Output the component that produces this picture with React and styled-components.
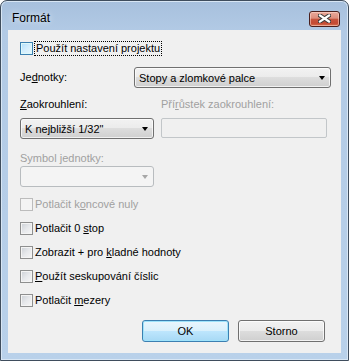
import React from 'react';
import styled, { createGlobalStyle, css } from 'styled-components';

const GlobalStyle = createGlobalStyle`
  html, body {
    margin: 0;
    padding: 0;
    background: #ffffff;
  }
  body {
    font-family: "Liberation Sans", Arial, sans-serif;
    font-size: 11px;
    color: #000;
  }
`;

const Window = styled.div`
  width: 349px;
  height: 361px;
  box-sizing: border-box;
  border: 1px solid #3f4d5d;
  border-radius: 7px 7px 0 0;
  background: linear-gradient(180deg, #a7c0dd 0px, #b2cae5 30px, #b9d1ea 100%);
  box-shadow: inset 0 0 0 1px #d8e6f4;
  display: flex;
  flex-direction: column;
  padding: 0 7px 7px 7px;
`;

const TitleBar = styled.div`
  height: 29px;
  display: flex;
  align-items: center;
  justify-content: space-between;
  padding: 0 1px 0 4px;
`;

const Title = styled.span`
  font-family: "Liberation Sans", Arial, sans-serif;
  font-size: 12px;
  color: #000;
  margin-top: 4px;
  text-shadow: 0 0 6px rgba(255, 255, 255, 0.9);
`;

const CloseButton = styled.div`
  width: 31px;
  height: 16px;
  box-sizing: border-box;
  margin-top: 6px;
  border: 1px solid #4a1f1d;
  border-radius: 3px;
  background: linear-gradient(180deg, #e9a99b 0%, #dd8d7c 45%, #c7553f 50%, #c44a33 80%, #d8704e 100%);
  box-shadow: inset 0 0 0 1px rgba(255, 220, 210, 0.55);
  display: flex;
  align-items: center;
  justify-content: center;
`;

const Client = styled.div`
  flex: 1;
  background: #f0f0f0;
  display: flex;
  flex-direction: column;
  padding: 10px 10px 0 12px;
`;

const Row = styled.div`
  display: flex;
  align-items: center;
  height: ${p => p.h || 21}px;
  margin-top: ${p => p.mt || 0}px;
`;

const Label = styled.span`
  color: ${p => (p.disabled ? '#a0a0a0' : '#000')};
  white-space: nowrap;
  line-height: 13px;
  ${p => p.focus && css`
    outline: 1px dotted #000;
    outline-offset: 0;
    padding: 0 1px;
  `}
`;

const Box = styled.span`
  width: 13px;
  height: 13px;
  box-sizing: border-box;
  flex: none;
  margin-right: 2px;
  border: 1px solid #8e8f8f;
  background: linear-gradient(135deg, #cbcfd5 0%, #e6e8eb 50%, #f7f7f7 100%);
  box-shadow: inset 0 0 0 1px #f4f4f4;
  ${p => p.hover && css`
    border-color: #3c7fb1;
    background: linear-gradient(135deg, #b1dffd 0%, #d4eefd 50%, #e9f7fe 100%);
    box-shadow: inset 0 0 0 1px #def9fa;
  `}
  ${p => p.disabled && css`
    border-color: #bcbcbc;
    background: #f4f4f4;
    box-shadow: none;
  `}
`;

const Combo = styled.div`
  width: ${p => p.w}px;
  height: 21px;
  box-sizing: border-box;
  margin-left: ${p => (p.right ? 'auto' : '0')};
  border: 1px solid ${p => (p.disabled ? '#b8bcbf' : '#707070')};
  border-radius: 3px;
  background: ${p => (p.disabled
    ? '#f4f4f4'
    : 'linear-gradient(180deg, #f2f2f2 0%, #ebebeb 50%, #dddddd 50%, #cfcfcf 100%)')};
  box-shadow: ${p => (p.disabled ? 'none' : 'inset 0 0 0 1px rgba(255,255,255,0.7)')};
  display: flex;
  align-items: center;
  padding: 0 5px 0 4px;
  white-space: nowrap;
`;

const ComboText = styled.span`
  flex: 1;
`;

const Arrow = styled.span`
  width: 0;
  height: 0;
  border-left: 3.5px solid transparent;
  border-right: 3.5px solid transparent;
  border-top: 4px solid ${p => (p.disabled ? '#a7a7a7' : '#000')};
`;

const Edit = styled.div`
  width: ${p => p.w}px;
  height: 20px;
  box-sizing: border-box;
  border: 1px solid #c2c6c9;
  border-radius: 2px;
  background: #f0f0f0;
`;

const Grid = styled.div`
  display: grid;
  grid-template-columns: 141px 1fr;
  grid-template-rows: 14px 20px;
  row-gap: 6px;
  margin-top: 10px;
  align-items: start;
`;

const Footer = styled.div`
  display: flex;
  justify-content: flex-end;
  gap: 9px;
  margin-top: 8px;
  padding-right: 6px;
`;

const Button = styled.div`
  width: 87px;
  height: 22px;
  box-sizing: border-box;
  border: 1px solid ${p => (p.primary ? '#3c7fb1' : '#707070')};
  border-radius: 3px;
  background: ${p => (p.primary
    ? 'linear-gradient(180deg, #eaf6fd 0%, #d9f0fc 50%, #bee6fd 50%, #a7d9f5 100%)'
    : 'linear-gradient(180deg, #f2f2f2 0%, #ebebeb 50%, #dddddd 50%, #cfcfcf 100%)')};
  box-shadow: inset 0 0 0 1px ${p => (p.primary ? '#9fe3fb' : 'rgba(255,255,255,0.75)')};
  display: flex;
  align-items: center;
  justify-content: center;
`;

const CheckRow = ({ children, disabled, hover, focus, mt }) => (
  <Row h={24} mt={mt}>
    <Box disabled={disabled} hover={hover} />
    <Label disabled={disabled} focus={focus}>{children}</Label>
  </Row>
);

export default function App() {
  return (
    <>
      <GlobalStyle />
      <Window>
        <TitleBar>
          <Title>Formát</Title>
          <CloseButton>
            <svg width="13" height="9" viewBox="0 0 13 9">
              <path d="M2 1.5 L11 7.5 M11 1.5 L2 7.5" stroke="#3a3a3a" strokeWidth="4.2" strokeLinecap="square" />
              <path d="M2 1.5 L11 7.5 M11 1.5 L2 7.5" stroke="#ffffff" strokeWidth="2.2" strokeLinecap="square" />
            </svg>
          </CloseButton>
        </TitleBar>
        <Client>
          <Row h={16}>
            <Box hover />
            <Label focus>Použít nastavení projektu</Label>
          </Row>
          <Row mt={11}>
            <Label>Je<u>d</u>notky:</Label>
            <Combo w={197} right>
              <ComboText>Stopy a zlomkové palce</ComboText>
              <Arrow />
            </Combo>
          </Row>
          <Grid>
            <Label><u>Z</u>aokrouhlení:</Label>
            <Label disabled>Pří<u>r</u>ůstek zaokrouhlení:</Label>
            <Combo w={134}>
              <ComboText>K nejbližší 1/32"</ComboText>
              <Arrow />
            </Combo>
            <Edit w={166} />
          </Grid>
          <Row h={14} mt={13}>
            <Label disabled>Symbol <u>j</u>ednotky:</Label>
          </Row>
          <Row mt={1}>
            <Combo w={134} disabled>
              <ComboText />
              <Arrow disabled />
            </Combo>
          </Row>
          <CheckRow disabled mt={5}>Potlačit k<u>o</u>ncové nuly</CheckRow>
          <CheckRow>Potlačit 0 <u>s</u>top</CheckRow>
          <CheckRow>Zobrazit + pro <u>k</u>ladné hodnoty</CheckRow>
          <CheckRow><u>P</u>oužít seskupování číslic</CheckRow>
          <CheckRow>Potlačit <u>m</u>ezery</CheckRow>
          <Footer>
            <Button primary>OK</Button>
            <Button>Storno</Button>
          </Footer>
        </Client>
      </Window>
    </>
  );
}
